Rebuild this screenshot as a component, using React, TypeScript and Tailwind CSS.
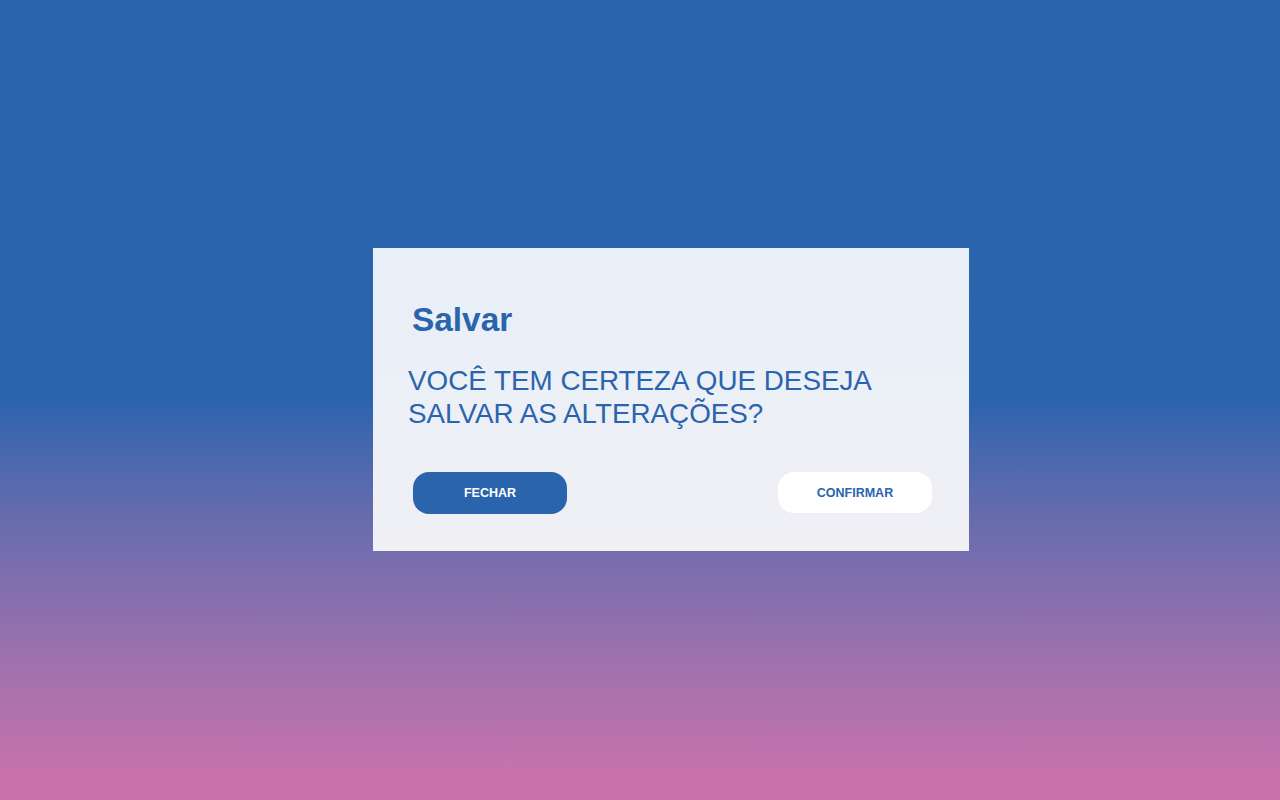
export default function App() {
  return (
    <div
      className="min-h-screen w-full flex items-center justify-center pl-[62px] pb-[1px] bg-gradient-to-b from-[#2a64ad] from-50% to-[#c872ac] to-[97%]"
      style={{ fontFamily: '"Liberation Sans", Arial, sans-serif' }}
    >
      <div className="w-[596px] h-[303px] bg-gradient-to-b from-[#e8eff8] to-[#f0f0f5] pt-[55px] pl-[35px] pr-[37px] pb-[37px] flex flex-col text-[#2a64ad]">
        <h1 className="ml-[4px] text-[33.4px] leading-none font-bold">Salvar</h1>
        <p className="mt-[28px] text-[27.8px] leading-[33px] max-w-[500px]">
          VOCÊ TEM CERTEZA QUE DESEJA SALVAR AS ALTERAÇÕES?
        </p>
        <div className="mt-[42px] ml-[5px] flex items-start justify-between">
          <button className="w-[154px] h-[42px] rounded-[16px] bg-[#2a64ad] text-white text-[12.5px] font-bold">
            FECHAR
          </button>
          <button className="w-[154px] h-[41px] rounded-[16px] bg-white text-[#2a64ad] text-[12.5px] font-bold">
            CONFIRMAR
          </button>
        </div>
      </div>
    </div>
  );
}
